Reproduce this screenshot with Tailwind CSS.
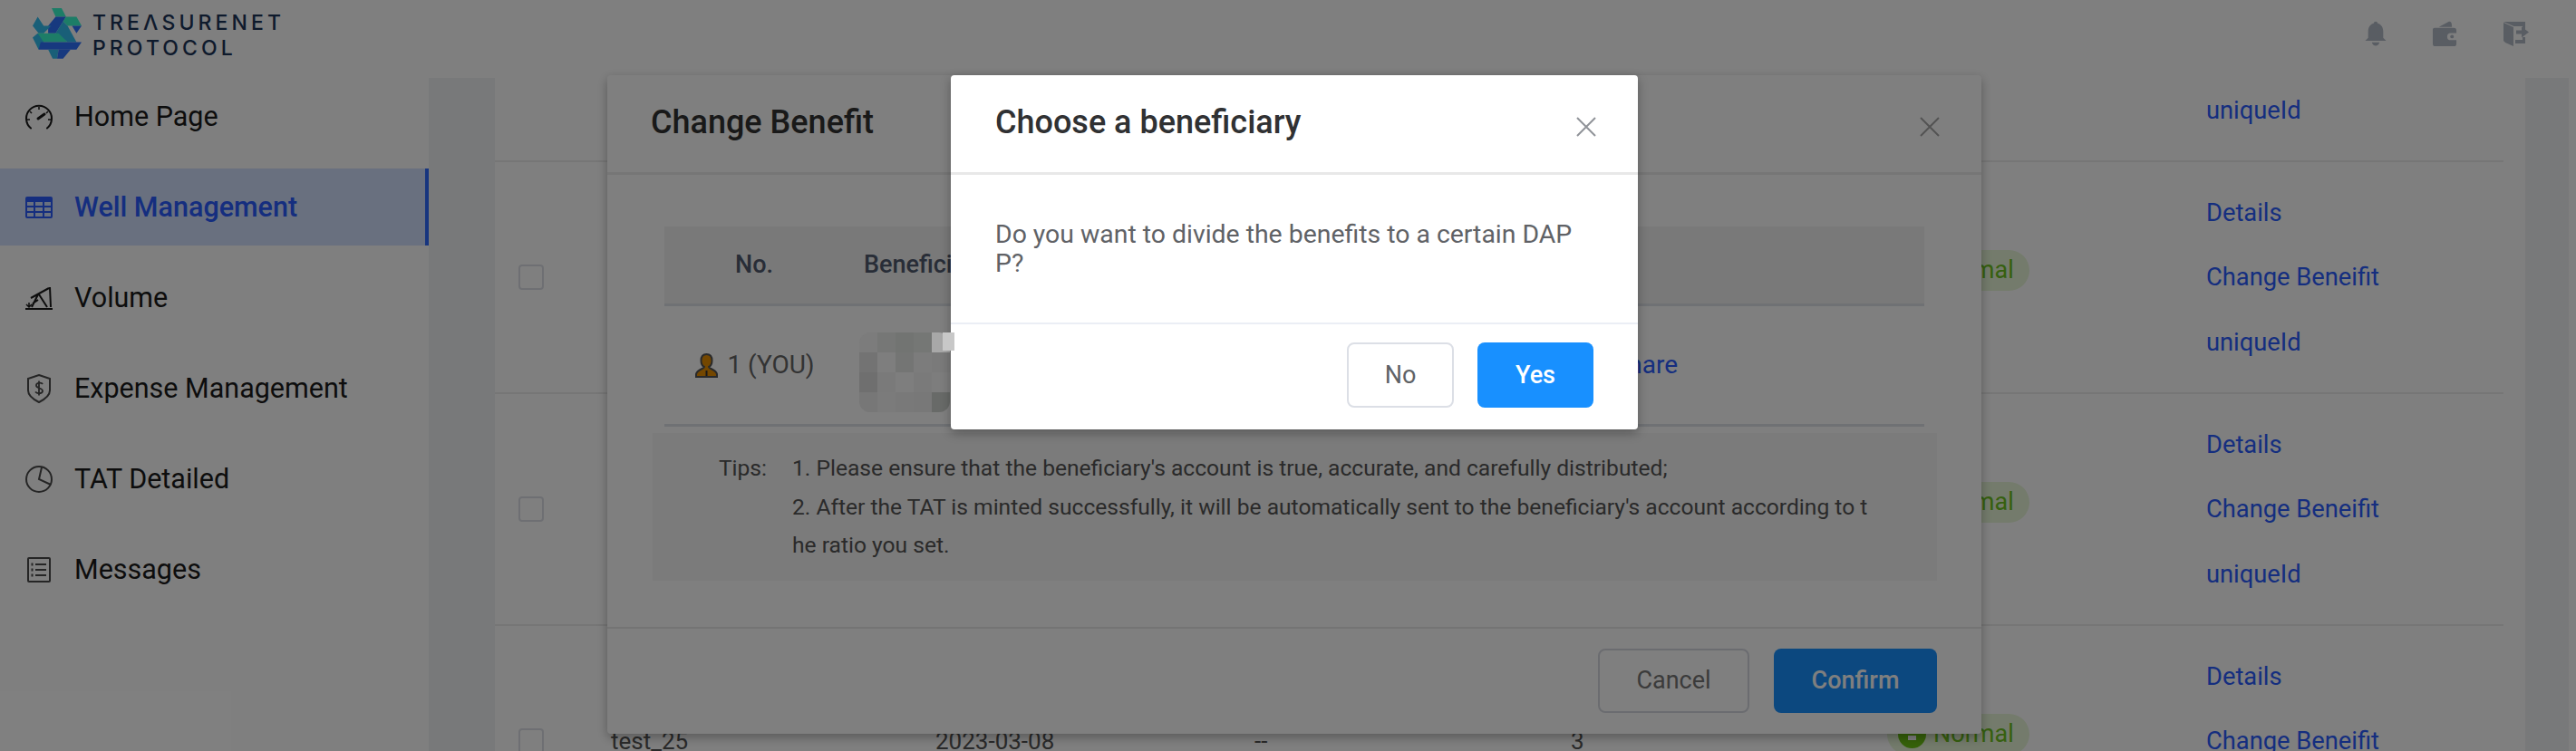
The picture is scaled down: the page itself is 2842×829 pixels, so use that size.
<!DOCTYPE html>
<html lang="en">
  <head>
    <title>Well Management</title>
    <script src="https://cdn.jsdelivr.net/npm/@tailwindcss/browser@4"></script>
  </head>
  <body class="bg-white font-['Roboto',sans-serif] overflow-hidden">
    <div class="relative w-[2842px] h-[829px] overflow-hidden">
      <!-- Header -->
      <header class="h-[86px] flex items-center justify-between bg-white pl-[36px] pr-[52px]">
        <div class="flex items-center gap-[12px] -mt-[12px]">
          <svg class="w-[54px] h-[56px]" viewBox="48 26 164 170">
            <polygon points="112,26 145,26 160,55 125,55" fill="#3afacf"/>
            <polygon points="125,55 160,55 125,110 100,110 100,85" fill="#2e72ff"/>
            <polygon points="160,55 195,55 212,85 165,85 150,70" fill="#3afacf"/>
            <polygon points="48,85 65,55 85,85 110,85 85,110 68,110" fill="#32bef0"/>
            <polygon points="180,85 212,85 195,110" fill="#2e72ff"/>
            <polygon points="150,70 165,85 195,140 165,140 125,110" fill="#32bef0"/>
            <polygon points="65,110 135,110 165,140 65,140" fill="#3afacf"/>
            <polygon points="48,125 65,110 85,140 68,165" fill="#32bef0"/>
            <polygon points="75,140 212,140 195,165 68,165" fill="#2e72ff"/>
            <polygon points="100,165 135,165 130,195 115,195" fill="#32bef0"/>
            <polygon points="135,165 175,165 150,195 130,195" fill="#2e72ff"/>
          </svg>
          <div class="mt-[4px] font-['Inter',sans-serif] font-medium text-[#1c3458] text-[23px] leading-[28px] tracking-[4.100px]">
            <div>TREΛSURENET</div>
            <div>PROTOCOL</div>
          </div>
        </div>
        <div class="flex items-center gap-[50px] -mt-[12px] text-[#b2bac6]">
          <svg class="w-[24px] h-[29px]" viewBox="0 0 26 30" fill="currentColor">
            <path d="M13 0c1.400 0 2.200 1 2.400 2.300C19.800 3.500 22 7.300 22 12v7.500l3.500 3.500H.5L4 19.500V12c0-4.700 2.200-8.500 6.600-9.700C10.800 1 11.600 0 13 0zM8.500 25h9c-.4 2.500-2.400 4-4.500 4s-4.100-1.500-4.500-4z"/>
          </svg>
          <svg class="w-[29px] h-[29px]" viewBox="0 0 30 30" fill="currentColor">
            <path d="M8 7 19 1c1.500-.6 3 0 3.500 2L23 7zM3 8h22c2 0 3 1 3 3v3h-6.500a4 4 0 0 0 0 8H28v4c0 2-1 3-3 3H4c-2 0-3-1-3-3V10c0-1 1-2 2-2z"/>
            <circle cx="23" cy="18" r="2"/>
          </svg>
          <svg class="w-[28px] h-[27px]" viewBox="0 0 28 27" fill="currentColor">
            <path d="M0 0h24v9h-3V5H11.500zM0 1l11 5v21l-9-4-2-2zM13 20h8v-3h3v7H13zM14 9.500h6V5.500l8 6-8 6v-4h-6z"/>
          </svg>
        </div>
      </header>

      <div class="flex h-[743px]">
        <!-- Sidebar -->
        <nav class="w-[473px] shrink-0 bg-white text-[30.500px] text-[#1a1a1a]">
          <a class="h-[85px] mb-[15px] flex items-center gap-[24px] pl-[28px]">
            <svg class="w-[30px] h-[30px]" viewBox="0 0 30 30" fill="none" stroke="currentColor" stroke-width="2">
              <path d="M6 27.500A14 14 0 1 1 24 27.500" stroke-linecap="round"/>
              <path d="M15 4v3M5 9l2 2M25 9l-2 2M2 18h3M28 18h-3" stroke-width="1.500"/>
              <path d="M14 17l7-5" stroke-width="3" stroke-linecap="round"/>
            </svg>
            Home Page
          </a>
          <a class="h-[85px] mb-[15px] flex items-center gap-[24px] pl-[28px] bg-[#d2e0ff] text-[#2a5cff] font-medium border-r-4 border-[#2f6bff]">
            <svg class="w-[30px] h-[24px]" viewBox="0 0 30 24" fill="currentColor">
              <path fill-rule="evenodd" d="M2 0h26a2 2 0 0 1 2 2v20a2 2 0 0 1-2 2H2a2 2 0 0 1-2-2V2a2 2 0 0 1 2-2zM2 6v4h7V6zm9 0v4h8V6zm10 0v4h7V6zM2 12v4h7v-4zm9 0v4h8v-4zm10 0v4h7v-4zM2 18v4h7v-4zm9 0v4h8v-4zm10 0v4h7v-4z"/>
            </svg>
            Well Management
          </a>
          <a class="h-[85px] mb-[15px] flex items-center gap-[24px] pl-[28px]">
            <svg class="w-[30px] h-[26px]" viewBox="0 0 30 26" fill="none" stroke="currentColor" stroke-width="2">
              <path d="M0 25h30" />
              <path d="M6 13 26 2M27 1l1 22M14 9l-7 14M15 9l9 14M8 19l6-4"/>
              <path d="M1 20l3 3 3-3M4 18v5" stroke-width="1.500"/>
            </svg>
            Volume
          </a>
          <a class="h-[85px] mb-[15px] flex items-center gap-[24px] pl-[28px]">
            <svg class="w-[30px] h-[32px]" viewBox="0 0 30 32" fill="none" stroke="#4a4a4a" stroke-width="2">
              <path d="M15 1l12 4v13c0 6-6 10-12 13C9 28 3 24 3 18V5z"/>
              <path d="M19 11c-1-2-7-2-7 1.500S19 15 19 18.500 13 22 11 19.500M15 7.500v16" stroke-width="1.800"/>
            </svg>
            Expense Management
          </a>
          <a class="h-[85px] mb-[15px] flex items-center gap-[24px] pl-[28px]">
            <svg class="w-[30px] h-[32px]" viewBox="0 0 30 32" fill="none" stroke="#4a4a4a" stroke-width="2">
              <circle cx="15" cy="16" r="14"/>
              <path d="M18 3l-3 13 13 6"/>
            </svg>
            TAT Detailed
          </a>
          <a class="h-[85px] flex items-center gap-[24px] pl-[28px]">
            <svg class="w-[30px] h-[28px]" viewBox="0 0 30 28" fill="none" stroke="#4a4a4a" stroke-width="2">
              <rect x="3" y="1" width="24" height="26" rx="1"/>
              <path d="M11 8h12M11 14h12M11 20h12"/>
              <path d="M6.500 8h2M6.500 14h2M6.500 20h2" stroke-width="3"/>
            </svg>
            Messages
          </a>
        </nav>

        <!-- Well table -->
        <main class="w-[2361px] shrink-0 bg-[#f1f2f5] pl-[73px] pr-[48px]">
          <div id="rows" class="h-full bg-white overflow-hidden pr-[24px]"></div>
        </main>
      </div>

      <!-- Change Benefit modal -->
      <div class="absolute left-[670px] top-[83px] w-[1516px] h-[727px] bg-white rounded-[4px] shadow-[0_4px_12px_rgba(0,0,0,0.3)] flex flex-col">
        <div class="h-[110px] shrink-0 border-b-[3px] border-[#ececec] pl-[48px] pr-[46px] flex items-center justify-between">
          <h2 class="text-[36px] font-medium text-[#333] -mt-[3px]">Change Benefit</h2>
          <svg class="w-[22px] h-[22px] mt-[6px] text-[#a6a6a6]" viewBox="0 0 22 22" stroke="currentColor" stroke-width="2"><path d="M1 1l20 20M21 1 1 21"/></svg>
        </div>
        <div class="flex-1 pt-[57px]">
          <div class="ml-[63px] w-[1390px]">
            <div class="h-[88px] bg-[#f2f2f2] border-b-[3px] border-[#dfe3e8] flex items-center text-[27px] font-medium text-[#505a6e]">
              <span class="w-[198px] text-center">No.</span>
              <span class="pl-[22px]">Beneficiary</span>
            </div>
            <div class="h-[133px] border-b-[3px] border-[#dfe3e8] flex items-center text-[28px] text-[#666]">
              <span class="w-[198px] flex items-center justify-center gap-[10px] pl-[2px]">
                <svg class="w-[25px] h-[27px]" viewBox="0 0 25 27">
                  <path d="M12.500 1c4 0 6 3 6 7 0 3-1.500 6-3.500 7 0 2 8 3 9 8v3H1v-3c1-5 9-6 9-8-2-1-3.500-4-3.500-7 0-4 2-7 6-7z" fill="#e98f00" stroke="#555" stroke-width="2"/>
                  <path d="M12.500 19v6" stroke="#333" stroke-width="2"/>
                </svg>
                1 (YOU)
              </span>
              <span class="ml-auto mr-[272px] text-[#2a5cff]">Share</span>
            </div>
          </div>
          <div class="ml-[50px] mt-[7px] w-[1417px] h-[163px] bg-[#f6f6f6] pt-[18px] flex text-[24.600px] leading-[42.500px] text-[#555]">
            <span class="w-[154px] shrink-0 text-right pr-[28px]">Tips:</span>
            <div class="w-[1196px] break-all">
              <p>1. Please ensure that the beneficiary's account is true, accurate, and carefully distributed;</p>
              <p>2. After the TAT is minted successfully, it will be automatically sent to the beneficiary's account according to the ratio you set.</p>
            </div>
          </div>
        </div>
        <div class="h-[118px] shrink-0 border-t-2 border-[#e8e8e8] flex justify-end items-start gap-[27px] pt-[22px] pr-[49px] text-[27px]">
          <button class="w-[167px] h-[71px] rounded-[8px] border-2 border-[#d6d9e0] text-[#777]">Cancel</button>
          <button class="w-[180px] h-[71px] rounded-[8px] bg-[#1890ff] text-white font-medium">Confirm</button>
        </div>
      </div>

      <!-- Mask -->
      <div class="absolute inset-0 bg-black/50"></div>

      <!-- Beneficiary redaction under the top modal -->
      <div class="absolute left-[948px] top-[367px] w-[100px] h-[88px] rounded-[12px] overflow-hidden grid grid-cols-5 grid-rows-4">
        <div class="bg-[#7c7c7c]"></div><div class="bg-[#767776]"></div><div class="bg-[#727472]"></div><div class="bg-[#757775]"></div><div class="bg-[#a8a8a8]"></div>
        <div class="bg-[#737373]"></div><div class="bg-[#7e7e7e]"></div><div class="bg-[#747574]"></div><div class="bg-[#7c7c7c]"></div><div class="bg-[#7a7a7a]"></div>
        <div class="bg-[#6f6f6f]"></div><div class="bg-[#7a7a7a]"></div><div class="bg-[#7e7e7e]"></div><div class="bg-[#7a7a7a]"></div><div class="bg-[#7d7d7d]"></div>
        <div class="bg-[#777777]"></div><div class="bg-[#7b7b7b]"></div><div class="bg-[#797979]"></div><div class="bg-[#787878]"></div><div class="bg-[#686a68]"></div>
      </div>

      <!-- Choose a beneficiary modal -->
      <div class="absolute left-[1049px] top-[83px] w-[758px] h-[391px] bg-white rounded-[4px] shadow-[0_4px_12px_rgba(0,0,0,0.3)] flex flex-col">
        <div class="h-[110px] shrink-0 border-b-[3px] border-[#e8e8e8] pl-[49px] pr-[46px] flex items-center justify-between">
          <h2 class="text-[36px] font-medium text-[#303133] -mt-[3px]">Choose a beneficiary</h2>
          <svg class="w-[22px] h-[22px] mt-[6px] text-[#909399]" viewBox="0 0 22 22" stroke="currentColor" stroke-width="2"><path d="M1 1l20 20M21 1 1 21"/></svg>
        </div>
        <p class="h-[163px] shrink-0 pt-[50px] pl-[49px] pr-[66px] text-[28.400px] leading-[32px] text-[#606266] break-all">Do you want to divide the benefits to a certain DAPP?</p>
        <div class="flex-1 border-t-2 border-[#ebeef5] flex justify-end items-start gap-[26px] pt-[20px] pr-[49px] text-[27px]">
          <button class="w-[118px] h-[72px] rounded-[8px] border-2 border-[#dcdfe6] text-[#606266]">No</button>
          <button class="w-[128px] h-[72px] rounded-[8px] bg-[#1890ff] text-white font-medium">Yes</button>
        </div>
      </div>

      <!-- Corner of the redaction, drawn over the top modal -->
      <div class="absolute left-[1040px] top-[367px] w-[13px] h-[20px] bg-[#c8c8c8]"></div>
    </div>

    <script>
      // one table row per well, the first one scrolled under the header
      const rows = document.getElementById("rows");
      const wells = [
        { cells: ["", "", "", ""], status: false, links: ["", "", "uniqueId"] },
        { cells: ["", "", "", ""], status: true, links: ["Details", "Change Beneifit", "uniqueId"] },
        { cells: ["", "", "", ""], status: true, links: ["Details", "Change Beneifit", "uniqueId"] },
        { cells: ["test_25", "2023-03-08", "--", "3"], status: true, links: ["Details", "Change Beneifit", ""] },
      ];
      wells.forEach((well, i) => {
        const row = document.createElement("div");
        row.className =
          "h-[256px] border-b-2 border-[#ececec] grid grid-cols-[128px_358px_352px_349px_349px_352px_1fr] items-center text-[26px] text-[#555]" +
          (i === 0 ? " -mt-[163px]" : "");
        const status = well.status
          ? `<span class="w-[157px] h-[45px] -mt-[15px] rounded-full bg-[#e8f7d8] flex items-center gap-[8px] pl-[12px] text-[#6cc020] text-[27px]">
              <svg class="w-[31px] h-[31px]" viewBox="0 0 31 31">
                <circle cx="15.500" cy="15.500" r="15.500" fill="#6cc414"/>
                <path d="M8 11h15v4H8zM11 17h9v5h-9z" fill="#fff"/>
              </svg>
              Normal
            </span>`
          : "<span></span>";
        row.innerHTML = `
          <span class="ml-[26px] w-[28px] h-[28px] rounded-[4px] border-2 border-[#dcdfe6]"></span>
          <span>${well.cells[0]}</span>
          <span>${well.cells[1]}</span>
          <span>${well.cells[2]}</span>
          <span>${well.cells[3]}</span>
          ${status}
          <span class="flex flex-col pt-[2px] text-[#2a5cff] text-[27.300px] leading-[71.500px]">
            <a class="h-[71.500px]">${well.links[0]}</a>
            <a class="h-[71.500px]">${well.links[1]}</a>
            <a class="h-[71.500px]">${well.links[2]}</a>
          </span>`;
        rows.appendChild(row);
      });
    </script>
  </body>
</html>
